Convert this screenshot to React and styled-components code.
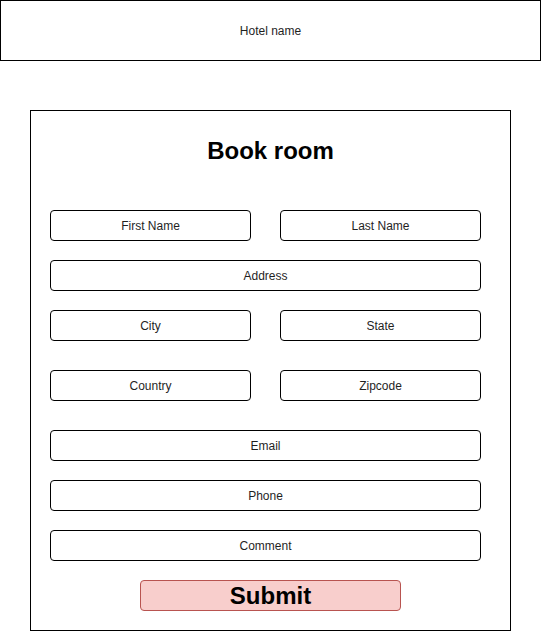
import React from 'react';
import styled, { createGlobalStyle } from 'styled-components';

// styling:

const GlobalStyle = createGlobalStyle`
  body {
    margin: 0;
    background: #fff;
    font-family: "Liberation Sans", Arial, Helvetica, sans-serif;
  }
`;

const Header = styled.header`
  box-sizing: border-box;
  width: 541px;
  height: 61px;
  border: 1px solid #000;
  display: flex;
  align-items: center;
  justify-content: center;
  font-size: 12px;
  color: #1f1f1f;
`;

const Card = styled.section`
  box-sizing: border-box;
  width: 481px;
  height: 521px;
  margin: 49px 0 0 30px;
  border: 1px solid #000;
  padding: 0 19px 19px;
  display: flex;
  flex-direction: column;
`;

const Title = styled.h2`
  box-sizing: border-box;
  height: 99px;
  margin: 0;
  padding-top: 26px;
  font-size: 24px;
  line-height: 28px;
  font-weight: bold;
  text-align: center;
  color: #000;
`;

const Row = styled.div`
  display: grid;
  grid-template-columns: ${(p) => (p.$split ? '201px 201px' : '431px')};
  column-gap: 29px;
  margin-top: ${(p) => p.$mt || 0}px;
`;

const Field = styled.div`
  box-sizing: border-box;
  height: 31px;
  border: 1px solid #000;
  border-radius: 4px;
  display: flex;
  align-items: center;
  justify-content: center;
  font-size: 12px;
  color: #1f1f1f;
`;

const SubmitButton = styled.button`
  box-sizing: border-box;
  align-self: center;
  width: 261px;
  height: 31px;
  margin-top: 19px;
  padding: 0;
  background: #f8cecc;
  border: 1px solid #b85450;
  border-radius: 4px;
  font-family: inherit;
  font-size: 24px;
  font-weight: bold;
  line-height: 29px;
  color: #000;
`;

// react:

const rows = [
  { fields: ['First Name', 'Last Name'], mt: 0 },
  { fields: ['Address'], mt: 19 },
  { fields: ['City', 'State'], mt: 19 },
  { fields: ['Country', 'Zipcode'], mt: 29 },
  { fields: ['Email'], mt: 29 },
  { fields: ['Phone'], mt: 19 },
  { fields: ['Comment'], mt: 19 },
];

const App = () => (
  <>
    <GlobalStyle />
    <Header>Hotel name</Header>
    <Card>
      <Title>Book room</Title>
      {rows.map((row) => (
        <Row key={row.fields[0]} $split={row.fields.length > 1} $mt={row.mt}>
          {row.fields.map((label) => (
            <Field key={label}>{label}</Field>
          ))}
        </Row>
      ))}
      <SubmitButton type="button">Submit</SubmitButton>
    </Card>
  </>
);

export default App;
